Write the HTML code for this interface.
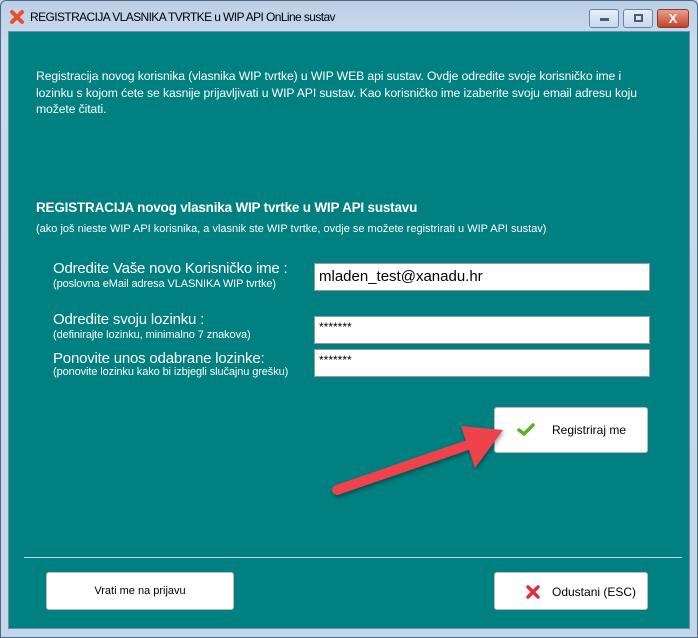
<!DOCTYPE html>
<html><head><meta charset="utf-8"><style>
*{margin:0;padding:0;box-sizing:border-box}
body{width:698px;height:638px;overflow:hidden;background:#c4d6ea;font-family:"Liberation Sans",Arial,sans-serif;position:relative}
.frame{position:absolute;left:0;top:0;width:698px;height:638px;background:linear-gradient(#bcd0e6,#c9daec 40px,#c4d6ea);border:1px solid #4d6a8a;border-radius:6px 6px 0 0}
.title{position:absolute;left:30px;top:10px;font-size:12px;color:#000;letter-spacing:-0.6px}
.content{position:absolute;left:8px;top:31px;width:682px;height:598px;background:#008080;border:1px solid #6f8fae}
.t{position:absolute;color:#fff;white-space:nowrap}
.inp{position:absolute;left:314px;width:336px;background:#fff;border:1px solid #999;color:#000}
.btn{position:absolute;background:#fff;border:1px solid #bbb;border-radius:3px;font-size:12px;color:#000;display:flex;align-items:center;justify-content:center}
.wb{position:absolute;top:9px;height:19px;border:1px solid #6d84a0;border-radius:3px;background:linear-gradient(#e6eef7,#c9d8ea)}
</style></head><body>
<div class="frame"></div>
<svg style="position:absolute;left:9px;top:9px" width="16" height="16" viewBox="0 0 16 16"><path d="M3 3 L13 13 M13 3 L3 13" stroke="#e8512a" stroke-width="4" stroke-linecap="round"/></svg>
<div class="title">REGISTRACIJA VLASNIKA TVRTKE u WIP API OnLine sustav</div>
<div class="wb" style="left:589px;width:30px"><div style="position:absolute;left:10px;top:8px;width:9px;height:3px;background:#4a5d75"></div></div>
<div class="wb" style="left:623px;width:30px"><div style="position:absolute;left:10px;top:4px;width:9px;height:8px;border:2px solid #4a5d75"></div></div>
<div class="wb" style="left:657px;width:32px;background:linear-gradient(#e9a08f,#c6422a);border-color:#8a3a2a;color:#fff;font-weight:bold;font-size:13px;text-align:center;line-height:17px">X</div>
<div class="content"></div>
<div class="t" style="left:36px;top:68px;font-size:12.2px;line-height:16.5px;letter-spacing:-0.1px">Registracija novog korisnika (vlasnika WIP tvrtke) u WIP WEB api sustav. Ovdje odredite svoje korisničko ime i<br>lozinku s kojom ćete se kasnije prijavljivati u WIP API sustav. Kao korisničko ime izaberite svoju email adresu koju<br>možete čitati.</div>
<div class="t" style="left:36px;top:200px;font-size:13.5px;font-weight:bold;letter-spacing:-0.2px">REGISTRACIJA novog vlasnika WIP tvrtke u WIP API sustavu</div>
<div class="t" style="left:36px;top:223px;font-size:11px;letter-spacing:0px">(ako još nieste WIP API korisnika, a vlasnik ste WIP tvrtke, ovdje se možete registrirati u WIP API sustav)</div>
<div class="t" style="left:53px;top:260px;font-size:15px;letter-spacing:-0.2px">Odredite Vaše novo Korisničko ime :</div>
<div class="t" style="left:53px;top:278px;font-size:11px;letter-spacing:-0.1px">(poslovna eMail adresa VLASNIKA WIP tvrtke)</div>
<div class="t" style="left:53px;top:311px;font-size:15px;letter-spacing:-0.2px">Odredite svoju lozinku :</div>
<div class="t" style="left:53px;top:329px;font-size:11px;letter-spacing:-0.1px">(definirajte lozinku, minimalno 7 znakova)</div>
<div class="t" style="left:53px;top:350px;font-size:15px;letter-spacing:-0.2px">Ponovite unos odabrane lozinke:</div>
<div class="t" style="left:53px;top:366px;font-size:11px;letter-spacing:-0.1px">(ponovite lozinku kako bi izbjegli slučajnu grešku)</div>
<div class="inp" style="top:263px;height:28px;font-size:15px;padding:4px 0 0 4px">mladen_test@xanadu.hr</div>
<div class="inp" style="top:316px;height:28px;font-size:12px;padding:3px 0 0 4px">*******</div>
<div class="inp" style="top:349px;height:28px;font-size:12px;padding:3px 0 0 4px">*******</div>
<div class="btn" style="left:494px;top:407px;width:154px;height:46px"><svg style="position:absolute;left:22px;top:15px" width="18" height="14" viewBox="0 0 18 14"><path d="M2 7 L7 11 L16 2" stroke="#5cb030" stroke-width="3.5" fill="none" stroke-linecap="round"/></svg><span style="position:absolute;left:57px;top:15px">Registriraj me</span></div>
<svg style="position:absolute;left:325px;top:420px" width="190" height="80" viewBox="0 0 190 80"><g filter="drop-shadow(1px 2px 2px rgba(0,0,0,.4))"><path d="M12 70 L140 26" stroke="#f0424a" stroke-width="10" stroke-linecap="round"/><path d="M178 10 L136 6 L150 48 Z" fill="#f0424a"/></g></svg>
<div style="position:absolute;left:24px;top:557px;width:658px;height:1px;background:#c8d8d8"></div>
<div class="btn" style="left:46px;top:572px;width:188px;height:38px;font-size:11px">Vrati me na prijavu</div>
<div class="btn" style="left:494px;top:572px;width:154px;height:38px"><svg style="position:absolute;left:30px;top:11px" width="16" height="16" viewBox="0 0 16 16"><path d="M3 3 L13 13 M13 3 L3 13" stroke="#e0303a" stroke-width="3.5" stroke-linecap="round"/></svg><span style="position:absolute;left:57px;top:12px">Odustani (ESC)</span></div>
</body></html>
